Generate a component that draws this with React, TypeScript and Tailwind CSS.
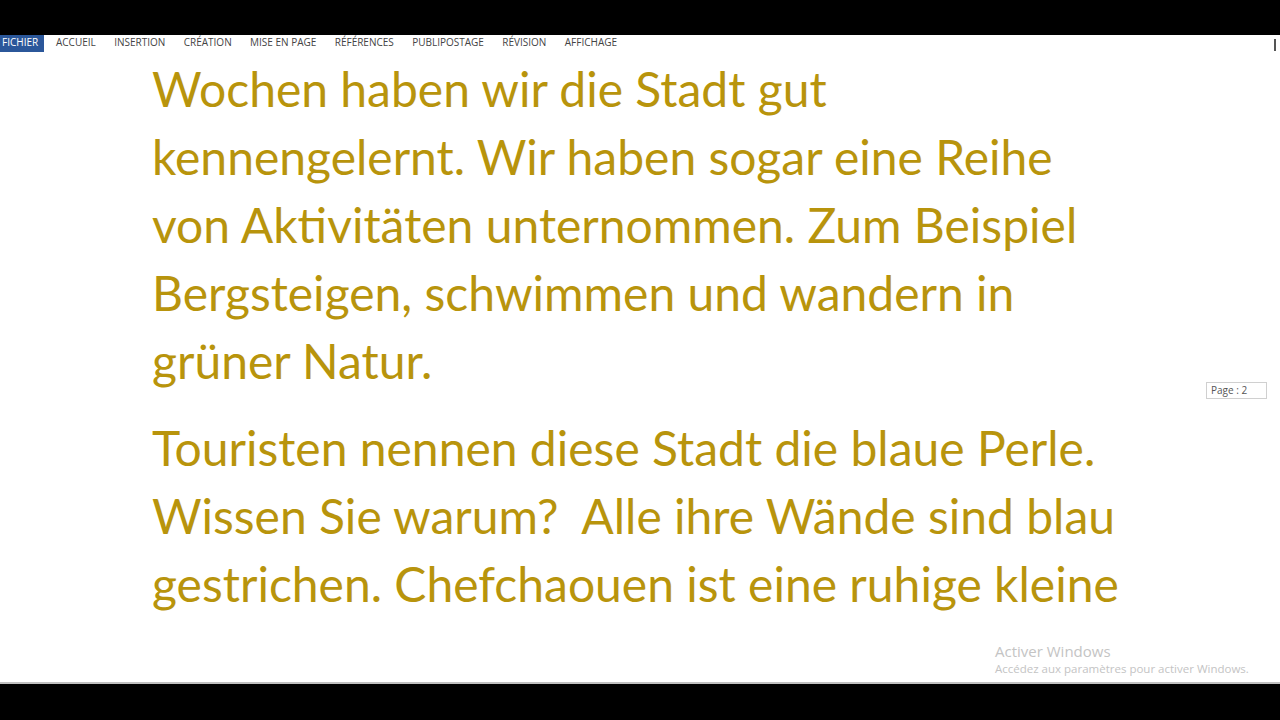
const tabs = ["ACCUEIL", "INSERTION", "CRÉATION", "MISE EN PAGE", "RÉFÉRENCES", "PUBLIPOSTAGE", "RÉVISION", "AFFICHAGE"];

const para1 = [
  "Wochen haben wir die Stadt gut",
  "kennengelernt. Wir haben sogar eine Reihe",
  "von Aktivitäten unternommen. Zum Beispiel",
  "Bergsteigen, schwimmen und wandern in",
  "grüner Natur.",
];

const para2 = [
  "Touristen nennen diese Stadt die blaue Perle.",
  "Wissen Sie warum?  Alle ihre Wände sind blau",
  "gestrichen. Chefchaouen ist eine ruhige kleine",
];

export default function App() {
  return (
    <div className="w-[1280px] h-[720px] bg-black flex flex-col overflow-hidden" style={{ fontFamily: "Lato, 'Open Sans', sans-serif" }}>
      <div className="h-[35px] shrink-0" />
      <div className="relative flex-1 bg-white flex flex-col">
        <div className="h-[17px] flex items-start text-[10px] leading-[15px] text-[#444]" style={{ fontFamily: "'Open Sans', sans-serif" }}>
          <div className="h-full bg-[#2b579a] text-white px-[2px] w-[44px]">FICHIER</div>
          <div className="flex gap-[18.4px] ml-[12px]">
            {tabs.map((t) => (
              <span key={t}>{t}</span>
            ))}
          </div>
          <div className="ml-auto mr-[4px] mt-[4px] w-[2px] h-[12px] bg-[#555]" />
        </div>

        <div className="pl-[152px] pt-[3px] text-[#b8940c] text-[48px] leading-[68px] whitespace-pre">
          {para1.map((l) => (
            <div key={l}>{l}</div>
          ))}
          <div className="h-[19px]" />
          {para2.map((l) => (
            <div key={l}>{l}</div>
          ))}
        </div>

        <div className="absolute left-[1206px] top-[347px] border border-[#d0d0d0] px-[4px] h-[17px] w-[61px] flex items-center text-[10px] text-[#555]" style={{ fontFamily: "'Open Sans', sans-serif" }}>
          Page : 2
        </div>

        <div className="absolute left-[995px] top-[606px] text-[#c4c4c4]" style={{ fontFamily: "'Open Sans', sans-serif" }}>
          <div className="text-[15px] leading-[20px]">Activer Windows</div>
          <div className="text-[11.5px] leading-[14px] mt-[1px]">Accédez aux paramètres pour activer Windows.</div>
        </div>

        <div className="mt-auto h-[2px] bg-[#c0c0c0]" />
      </div>
      <div className="h-[36px] shrink-0" />
    </div>
  );
}
